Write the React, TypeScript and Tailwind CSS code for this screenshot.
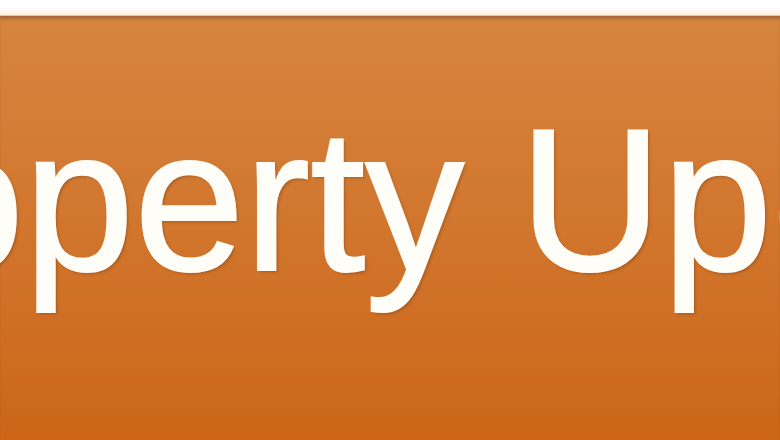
export default function App() {
  return (
    <div className="w-[780px] h-[440px] overflow-hidden bg-white flex flex-col">
      <div className="h-[15px] bg-gradient-to-b from-white via-white to-[#fcefdc]" />
      <div className="h-px bg-[#e6c896]" />
      <div className="flex-1 bg-gradient-to-b from-[#d6853f] to-[#cc6616] shadow-[inset_0_4px_3px_-1px_rgba(110,70,40,0.45)] overflow-hidden">
        <div
          className="mt-[88px] ml-[-284px] origin-bottom scale-y-[1.025] whitespace-nowrap text-[198px] leading-none text-[#fffdf8] [-webkit-text-stroke:2px_#fffdf8] [text-shadow:2px_2px_3px_rgba(90,40,0,0.35)]"
          style={{ fontFamily: '"Liberation Sans", Arial, sans-serif' }}
        >
          Property Updates
        </div>
      </div>
    </div>
  );
}
